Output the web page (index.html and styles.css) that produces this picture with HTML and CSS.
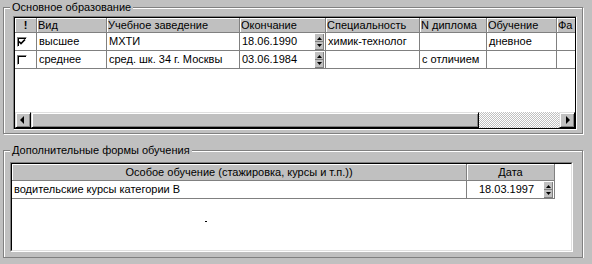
FILE: index.html
```html
<!DOCTYPE html>
<html lang="ru">

<head>
  <meta charset="UTF-8" />
  <title>Образование</title>
  <link rel="stylesheet" href="styles.css">
</head>

<body>
  <div class="group group-main">
    <span class="caption">Основное образование</span>
    <div class="grid">
      <div class="grid-inner main-inner">
        <div class="rows">
          <div class="row row-main head">
            <div class="cell flag">!</div>
            <div class="cell">Вид</div>
            <div class="cell">Учебное заведение</div>
            <div class="cell">Окончание</div>
            <div class="cell">Специальность</div>
            <div class="cell">N диплома</div>
            <div class="cell">Обучение</div>
            <div class="cell">Фа</div>
          </div>
          <div class="row row-main body">
            <div class="cell flag"><span class="check on"><svg width="8" height="8" viewBox="0 0 8 8"><polyline points="1,3.5 3,5.5 7,1.5" fill="none" stroke="#000" stroke-width="1.7"/></svg></span></div>
            <div class="cell">высшее</div>
            <div class="cell">МХТИ</div>
            <div class="cell date">18.06.1990<span class="spin"><svg width="9" height="16" viewBox="0 0 9 16"><rect width="9" height="16" fill="#808080"/><rect x="0" y="0" width="8" height="7" fill="#c0c0c0"/><rect x="0" y="8" width="8" height="7" fill="#c0c0c0"/><polygon points="2,6 4.5,3 7,6" fill="#000"/><polygon points="2,10 7,10 4.5,13" fill="#000"/></svg></span></div>
            <div class="cell">химик-технолог</div>
            <div class="cell"></div>
            <div class="cell">дневное</div>
            <div class="cell"></div>
          </div>
          <div class="row row-main body">
            <div class="cell flag"><span class="check"></span></div>
            <div class="cell">среднее</div>
            <div class="cell">сред. шк. 34 г. Москвы</div>
            <div class="cell date">03.06.1984<span class="spin"><svg width="9" height="16" viewBox="0 0 9 16"><rect width="9" height="16" fill="#808080"/><rect x="0" y="0" width="8" height="7" fill="#c0c0c0"/><rect x="0" y="8" width="8" height="7" fill="#c0c0c0"/><polygon points="2,6 4.5,3 7,6" fill="#000"/><polygon points="2,10 7,10 4.5,13" fill="#000"/></svg></span></div>
            <div class="cell"></div>
            <div class="cell">с отличием</div>
            <div class="cell"></div>
            <div class="cell"></div>
          </div>
        </div>
        <div class="scrollbar">
          <span class="sb-btn"><svg width="14" height="14" viewBox="0 0 14 14"><polygon points="8,3 8,11 4,7" fill="#000"/></svg></span>
          <span class="sb-thumb"></span>
          <span class="sb-track"></span>
          <span class="sb-btn"><svg width="14" height="14" viewBox="0 0 14 14"><polygon points="6,3 6,11 10,7" fill="#000"/></svg></span>
        </div>
      </div>
    </div>
  </div>

  <div class="group group-extra">
    <span class="caption">Дополнительные формы обучения</span>
    <div class="grid">
      <div class="grid-inner extra-inner">
        <div class="row row-extra head">
          <div class="cell">Особое обучение (стажировка, курсы и т.п.))</div>
          <div class="cell">Дата</div>
        </div>
        <div class="row row-extra body">
          <div class="cell">водительские курсы категории B</div>
          <div class="cell date"><span class="date-text">18.03.1997</span><span class="spin"><svg width="9" height="16" viewBox="0 0 9 16"><rect width="9" height="16" fill="#808080"/><rect x="0" y="0" width="8" height="7" fill="#c0c0c0"/><rect x="0" y="8" width="8" height="7" fill="#c0c0c0"/><polygon points="2,6 4.5,3 7,6" fill="#000"/><polygon points="2,10 7,10 4.5,13" fill="#000"/></svg></span></div>
        </div>
        <span class="dot"></span>
      </div>
    </div>
  </div>
</body>

</html>
```

FILE: styles.css
```css
body {
  margin: 0;
  background: #c0c0c0;
  font-family: "Liberation Sans", Arial, sans-serif;
  font-size: 11px;
  color: #000;
}

/* etched group box */
.group {
  position: relative;
  width: 580px;
  margin-left: 3px;
  box-sizing: border-box;
  border: 1px solid #808080;
  box-shadow: 1px 1px 0 #fff, inset 1px 1px 0 #fff;
}

.group-main {
  margin-top: 7px;
  padding: 8px 5px 3px 9px;
}

.group-extra {
  margin-top: 16px;
  padding: 11px 9px 5px 6px;
}

.caption {
  position: absolute;
  top: -8px;
  left: 6px;
  padding: 0 2px;
  line-height: 14px;
  background: #c0c0c0;
}

/* sunken grid frame */
.grid {
  border: 1px solid;
  border-color: #808080 #fff #fff #808080;
}

.grid-inner {
  background: #fff;
  overflow: hidden;
}

.main-inner {
  border: 1px solid #000;
  height: 110px;
  display: flex;
  flex-direction: column;
}

.rows {
  flex: 1;
  overflow: hidden;
}

.extra-inner {
  position: relative;
  height: 86px;
  border: 1px solid;
  border-color: #000 #dfdfdf #dfdfdf #000;
}

.row {
  display: grid;
}

.row-main {
  grid-template-columns: 22px 70px 133px 86px 94px 67px 70px 40px;
  width: 582px;
}

.row-extra {
  grid-template-columns: 455px 88px;
}

.cell {
  box-sizing: border-box;
  white-space: nowrap;
  overflow: hidden;
  border-right: 1px solid #808080;
  border-bottom: 1px solid #808080;
}

.head .cell {
  height: 15px;
  line-height: 14px;
  padding: 0 1px;
  background: #c0c0c0;
  box-shadow: inset 1px 1px 0 #fff;
}

.row-extra.head .cell {
  height: 17px;
  line-height: 16px;
  text-align: center;
}

.body .cell {
  height: 18px;
  line-height: 17px;
  padding: 0 2px;
  background: #fff;
}

.head .flag {
  text-align: center;
  font-weight: bold;
}

.body .flag {
  display: flex;
  align-items: center;
  padding: 0 0 0 2px;
}

.check {
  display: flex;
  align-items: center;
  justify-content: center;
  width: 10px;
  height: 10px;
  box-sizing: border-box;
  border: 1px solid;
  border-color: #808080 #fff #fff #808080;
  box-shadow: inset 1px 1px 0 #000;
  background: #fff;
}

.date {
  display: flex;
  align-items: center;
}

.body .date {
  padding-right: 1px;
}

.spin {
  display: flex;
  margin-left: auto;
}

.date-text {
  flex: 1;
  text-align: center;
}

/* horizontal scroll bar */
.scrollbar {
  display: flex;
  height: 16px;
}

.sb-btn,
.sb-thumb {
  display: flex;
  box-sizing: border-box;
  height: 16px;
  background: #c0c0c0;
  border: 1px solid;
  border-color: #dfdfdf #000 #000 #dfdfdf;
  box-shadow: inset 1px 1px 0 #fff, inset -1px -1px 0 #808080;
}

.sb-btn {
  width: 16px;
}

.sb-thumb {
  width: 448px;
}

.sb-track {
  flex: 1;
  background-image: repeating-conic-gradient(#fff 0 25%, #c0c0c0 0 50%);
  background-size: 2px 2px;
}

.dot {
  position: absolute;
  left: 193px;
  top: 57px;
  width: 2px;
  height: 1px;
  background: #000;
}
```
